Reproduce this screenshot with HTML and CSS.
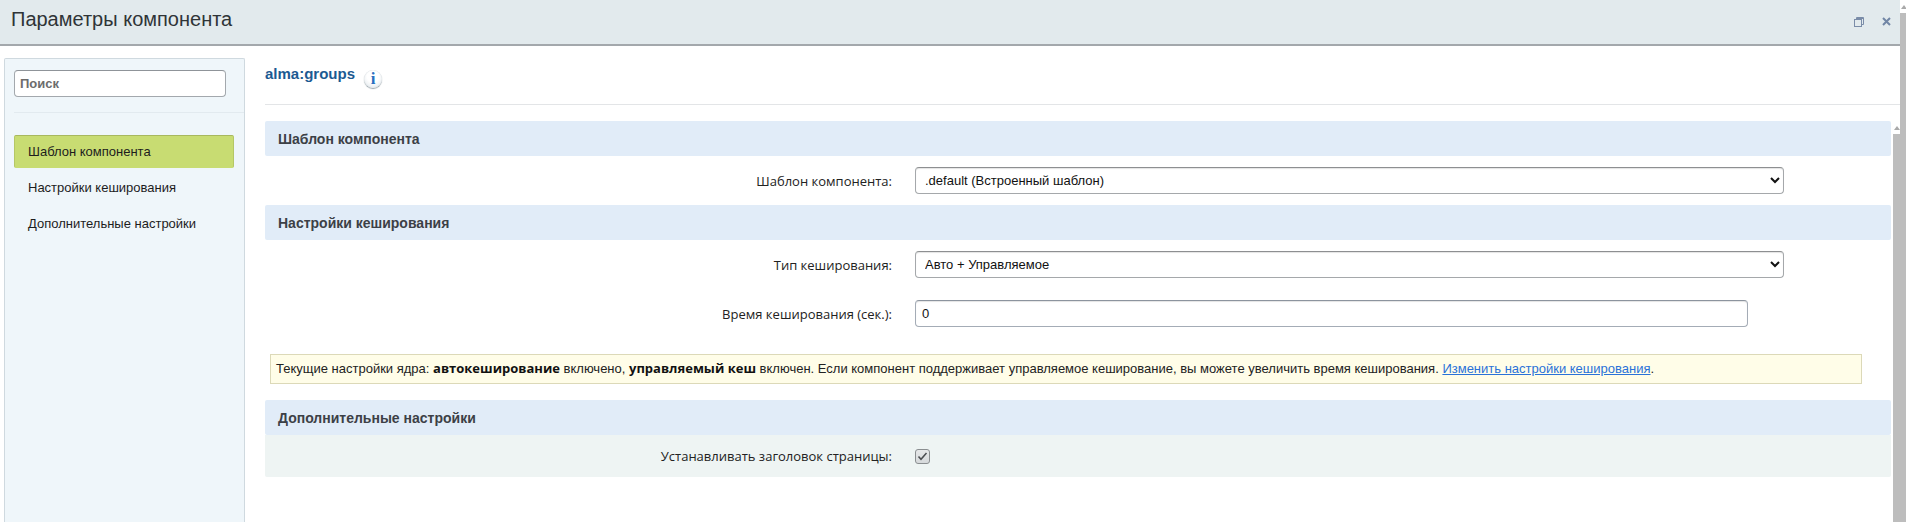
FILE: index.html
```html
<!DOCTYPE html>
<html lang="ru">
<head>
<meta charset="utf-8">
<title>Параметры компонента</title>
<link rel="stylesheet" href="styles.css">
</head>
<body>
<div class="window">
  <div class="main">
    <header class="titlebar">
      <h1 class="title">Параметры компонента</h1>
      <div class="title-icons">
        <svg class="ico-restore" width="10" height="10" viewBox="0 0 10 10"><path d="M2.5 .5h7v7h-2M2.5 .5v2" fill="none" stroke="#7a8ca8"/><path d="M2.5 1h7v1h-7z" fill="#7a8ca8"/><rect x=".5" y="2.5" width="7" height="7" fill="none" stroke="#7a8ca8"/></svg>
        <svg class="ico-close" width="9" height="9" viewBox="0 0 9 9"><path d="M1 1l7 7M8 1l-7 7" fill="none" stroke="#7186a5" stroke-width="2"/></svg>
      </div>
    </header>
    <div class="body">
      <aside class="sidebar">
        <div class="search-wrap"><input class="search" type="text" placeholder="Поиск"></div>
        <nav class="nav">
          <a class="nav-item active">Шаблон компонента</a>
          <a class="nav-item">Настройки кеширования</a>
          <a class="nav-item">Дополнительные настройки</a>
        </nav>
      </aside>
      <main class="content">
        <div class="head">
          <span class="comp-name">alma:groups</span>
          <span class="info">i</span>
        </div>
        <div class="scroll-area">
          <div class="form">
            <div class="section">Шаблон компонента</div>
            <div class="row row-a">
              <label class="label">Шаблон компонента:</label>
              <select class="field sel"><option>.default (Встроенный шаблон)</option></select>
            </div>
            <div class="section">Настройки кеширования</div>
            <div class="row row-b">
              <label class="label">Тип кеширования:</label>
              <select class="field sel"><option>Авто + Управляемое</option></select>
            </div>
            <div class="row row-c">
              <label class="label">Время кеширования (сек.):</label>
              <input class="field txt" type="text" value="0">
            </div>
            <div class="note">Текущие настройки ядра: <b>автокеширование</b> включено, <b>управляемый кеш</b> включен. Если компонент поддерживает управляемое кеширование, вы можете увеличить время кеширования. <a class="link">Изменить настройки кеширования</a>.</div>
            <div class="section">Дополнительные настройки</div>
            <div class="row row-d">
              <label class="label">Устанавливать заголовок страницы:</label>
              <span class="check"><svg width="13" height="13" viewBox="0 0 13 13"><path d="M2.5 6.5l2.5 2.8L10.5 3" fill="none" stroke="#4a4d50" stroke-width="1.5"/></svg></span>
            </div>
          </div>
          <div class="vbar inner"><span class="arrow"></span><span class="thumb"></span></div>
        </div>
      </main>
    </div>
  </div>
  <div class="vbar outer"><span class="arrow"></span><span class="thumb"></span></div>
</div>
</body>
</html>
```
FILE: styles.css
```css
* { box-sizing: border-box; }
html, body { margin: 0; height: 522px; overflow: hidden; background: #fff; }
body { font: 13px "Liberation Sans", Arial, sans-serif; color: #1a1a1a; }
.window { display: flex; height: 522px; }
.main { width: 1900px; display: flex; flex-direction: column; }

.titlebar { height: 46px; flex: none; background: #e2eaed; border-bottom: 2px solid #a3a8ac; display: flex; align-items: flex-start; justify-content: space-between; padding: 0 9px 0 11px; }
.title { margin: 7px 0 0; font-size: 20px; font-weight: normal; line-height: 24px; color: #2f3437; }
.title-icons { display: flex; gap: 18px; padding-top: 17px; }
.title-icons svg { display: block; }

.body { flex: 1; display: flex; min-height: 0; padding: 12px 0 0 4px; }
.sidebar { width: 241px; flex: none; background: #eff6fa; border: 1px solid #cfd9df; border-bottom: 0; border-radius: 2px 2px 0 0; padding: 11px 0 0 9px; }
.search-wrap { border-bottom: 1px solid #e2eaef; padding-bottom: 15px; }
.search { display: block; width: 212px; height: 27px; border: 1px solid #a3a8ad; border-top-color: #8f9499; border-radius: 4px; background: #fff; padding: 0 5px; font: bold 13px "Liberation Sans", Arial, sans-serif; }
.search::placeholder { color: #6c6c6c; opacity: 1; }
.nav { display: flex; flex-direction: column; padding-top: 22px; gap: 3px; }
.nav-item { width: 220px; height: 33px; line-height: 33px; padding-left: 14px; color: #1d1d1d; font-size: 13px; }
.nav-item.active { background: #c8dc72; border: 1px solid #b5c766; border-top-color: #a8b85e; border-bottom-color: #c8dc72; border-radius: 2px; padding-left: 13px; line-height: 32px; }

.content { flex: 1; min-width: 0; padding-left: 20px; display: flex; flex-direction: column; }
.head { height: 47px; flex: none; border-bottom: 1px solid #e3e5e7; display: flex; align-items: flex-start; }
.comp-name { margin-top: 7px; font-size: 15px; line-height: 18px; font-weight: bold; color: #1c5a92; }
.info { margin: 12px 0 0 9px; width: 18px; height: 18px; border-radius: 50%; background: radial-gradient(circle at 50% 35%, #fff 40%, #dbe3e8 100%); box-shadow: 0 1px 1px #9aa4aa, inset 0 0 1px #c4ccd1; text-align: center; font: bold 17px/18px "Liberation Serif", serif; color: #2a6fc0; }

.scroll-area { flex: 1; display: flex; min-height: 0; padding-top: 16px; }
.form { width: 1626px; flex: none; }
.section { height: 35px; line-height: 36px; padding-left: 13px; background: #e1ecf8; border-radius: 2px; font-weight: bold; font-size: 14px; color: #3c4046; }
.row { display: grid; grid-template-columns: 650px 1fr; align-items: center; }
.label { text-align: right; padding-right: 23px; color: #222; font: 13px "Open Sans", sans-serif; }
.row-a { padding: 11px 0; }
.row-b { padding: 11px 0 0; }
.row-c { padding: 22px 0 0; }
.row-d { height: 42px; background: #eef4f3; border-radius: 0 0 2px 2px; }

.field { height: 27px; font: 13px "Liberation Sans", Arial, sans-serif; color: #111; background: #fff; border: 1px solid #a5a8ab; border-top-color: #8d8f91; border-radius: 4px; box-shadow: inset 0 1px 1px #e4e4e4; }
.sel { width: 869px; padding: 0 5px; }
.txt { width: 833px; padding: 0 6px; border-color: #a4acb6; border-top-color: #8c949e; }

.note { margin: 27px 29px 16px 5px; height: 30px; line-height: 28px; padding-left: 5px; background: #fffde8; border: 1px solid #dcd9b8; color: #222; white-space: nowrap; }
.note b { color: #111; font: bold 13px "Open Sans", sans-serif; }
.link { color: #2a72d8; text-decoration: underline; }

.check { width: 15px; height: 15px; display: flex; align-items: center; justify-content: center; background: linear-gradient(#e6e8e9, #d6d9db); border: 1px solid #8a8e90; border-radius: 3px; }
.check svg { display: block; flex: none; }

.vbar { display: flex; flex-direction: column; align-items: stretch; flex: none; }
.vbar .arrow { height: 13px; position: relative; }
.vbar .arrow::before { content: ""; position: absolute; left: 1px; top: 5px; border: 3px solid transparent; border-top: 0; border-bottom: 4px solid #a9a9a9; }
.vbar .thumb { flex: 1; background: #bdbdbd; }
.vbar.inner { width: 7px; margin-left: 2px; }
.vbar.outer { width: 6px; }
```
